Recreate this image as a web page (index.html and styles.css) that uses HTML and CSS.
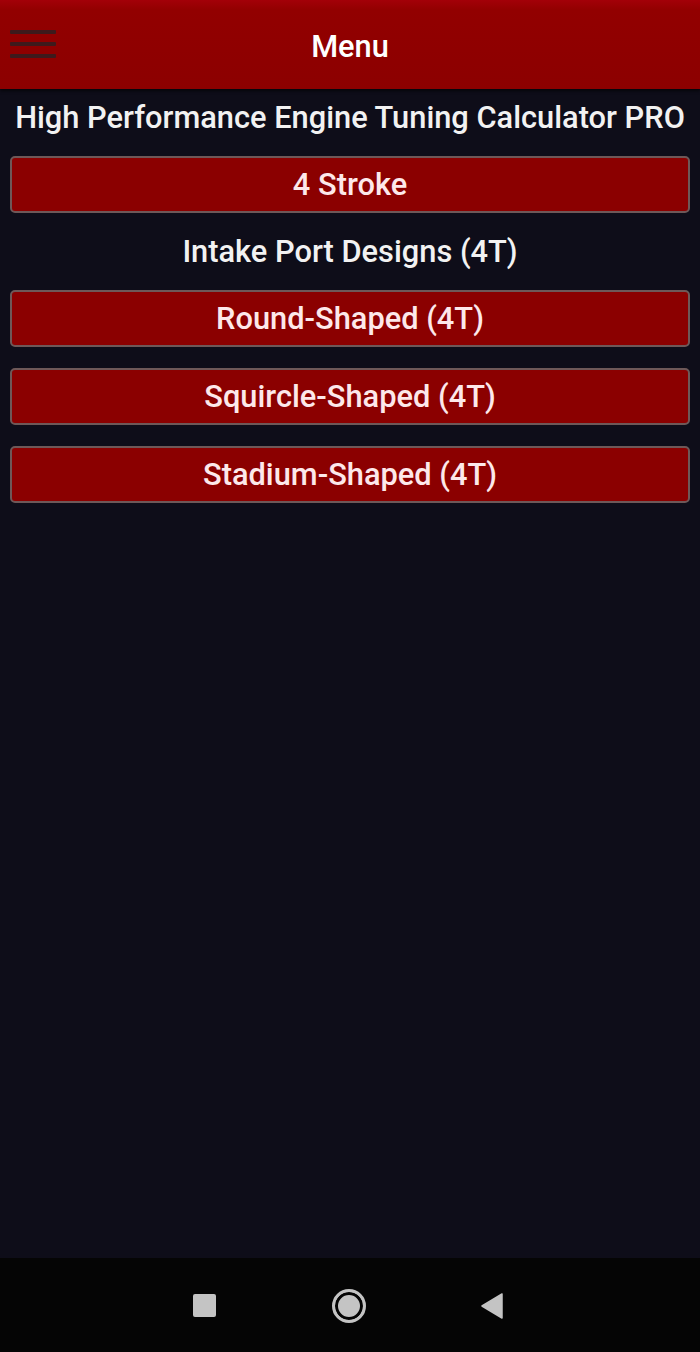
FILE: index.html
```html
<!DOCTYPE html>
<html>
<head>
<meta charset="utf-8">
<link rel="stylesheet" href="styles.css">
</head>
<body>
<div class="screen">
  <header class="topbar">
    <div class="burger"><span></span><span></span><span></span></div>
    <div class="topbar-title">Menu</div>
  </header>
  <main class="content">
    <h1 class="app-title">High Performance Engine Tuning Calculator PRO</h1>
    <button class="btn">4 Stroke</button>
    <h2 class="section">Intake Port Designs (4T)</h2>
    <div class="btn-list">
      <button class="btn">Round-Shaped (4T)</button>
      <button class="btn">Squircle-Shaped (4T)</button>
      <button class="btn">Stadium-Shaped (4T)</button>
    </div>
  </main>
  <nav class="navbar">
    <span class="nav-square"></span>
    <span class="nav-home"></span>
    <svg class="nav-back" width="22" height="26" viewBox="0 0 22 26"><path d="M21 1 L21 25 L1 13 Z" fill="#c4c4c4" stroke="#c4c4c4" stroke-width="1.5" stroke-linejoin="round"/></svg>
  </nav>
</div>
</body>
</html>
```

FILE: styles.css
```css
* { box-sizing: border-box; }
html, body { margin: 0; padding: 0; }
body {
  background: #0e0d19;
  font-family: Roboto, "Liberation Sans", sans-serif;
}
.screen {
  width: 700px;
  height: 1352px;
  display: flex;
  flex-direction: column;
  background: #0e0d19;
}
.topbar {
  height: 89px;
  flex: none;
  display: flex;
  align-items: center;
  justify-content: center;
  position: relative;
  background: linear-gradient(#a30008 0px, #920000 10px, #8c0000 100%);
  box-shadow: 0 2px 3px rgba(0,0,0,0.6);
}
.burger {
  position: absolute;
  left: 10px;
  top: 30px;
  width: 46px;
  display: flex;
  flex-direction: column;
  gap: 8px;
}
.burger span {
  display: block;
  height: 4px;
  background: #3e1a1c;
  border-radius: 1px;
}
.topbar-title {
  color: #fff;
  font-size: 30.8px;
  font-weight: 500;
  margin-top: 4px;
}
.content {
  flex: 1;
  padding: 0 10px;
  display: flex;
  flex-direction: column;
}
.app-title {
  margin: 11px 0 0;
  height: 56px;
  text-align: center;
  color: #f2f2f2;
  font-size: 30.8px;
  font-weight: 500;
  line-height: 36px;
  white-space: nowrap;
}
.section {
  margin: 0;
  height: 77px;
  display: flex;
  align-items: center;
  justify-content: center;
  color: #f2f2f2;
  font-size: 30.8px;
  font-weight: 500;
}
.btn {
  display: block;
  width: 100%;
  height: 57px;
  background: #8b0000;
  border: 2px solid #6e5858;
  border-radius: 5px;
  color: #fde8ea;
  font-family: Roboto, "Liberation Sans", sans-serif;
  font-size: 30.8px;
  font-weight: 500;
  padding: 0;
}
.btn-list {
  display: flex;
  flex-direction: column;
  gap: 21px;
}
.navbar {
  height: 94px;
  flex: none;
  background: #050505;
  position: relative;
}
.nav-square {
  position: absolute;
  left: 193px;
  top: 36px;
  width: 23px;
  height: 23px;
  background: #c4c4c4;
  border-radius: 2px;
}
.nav-home {
  position: absolute;
  left: 332px;
  top: 31px;
  width: 34px;
  height: 34px;
  border: 3px solid #c4c4c4;
  border-radius: 50%;
  background: #c4c4c4;
  box-shadow: inset 0 0 0 3px #050505;
}
.nav-back {
  position: absolute;
  left: 481px;
  top: 35px;
}
```
